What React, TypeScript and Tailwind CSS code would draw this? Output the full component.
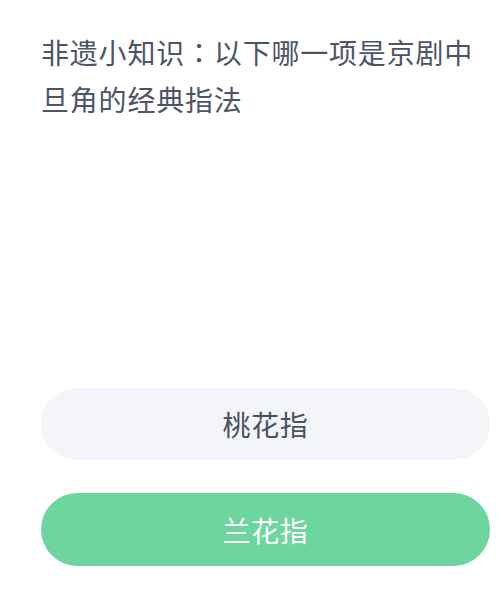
import React from 'react';

const font = { fontFamily: '"Noto Sans CJK SC", "Noto Sans", sans-serif' };

export function Option({ label, active }: { label: string; active?: boolean }) {
    return (
        <div
            className={
                active
                    ? 'flex h-[73px] items-center justify-center rounded-full bg-[#6dd69f] text-[28px] text-white'
                    : 'flex h-[72px] items-center justify-center rounded-full bg-[#f4f5f8] text-[28px] text-[#4a5262]'
            }
        >
            <span className="tracking-[0.6px]">{label}</span>
        </div>
    );
}

export default function App() {
    return (
        <div className="h-[591px] w-[500px] overflow-hidden bg-white pl-[41px] pr-[10px]" style={font}>
            <div className="pt-[29px] text-[28px] leading-[47px] tracking-[0.8px] text-[#4d5466]">
                非遗小知识
                <span className="[font-family:'Noto_Sans_CJK_TC',sans-serif]">：</span>
                以下哪一项是京剧中旦角的经典指法
            </div>
            <div className="mt-[265px] flex flex-col gap-[33px]">
                <Option label="桃花指" />
                <Option label="兰花指" active />
            </div>
        </div>
    );
}
